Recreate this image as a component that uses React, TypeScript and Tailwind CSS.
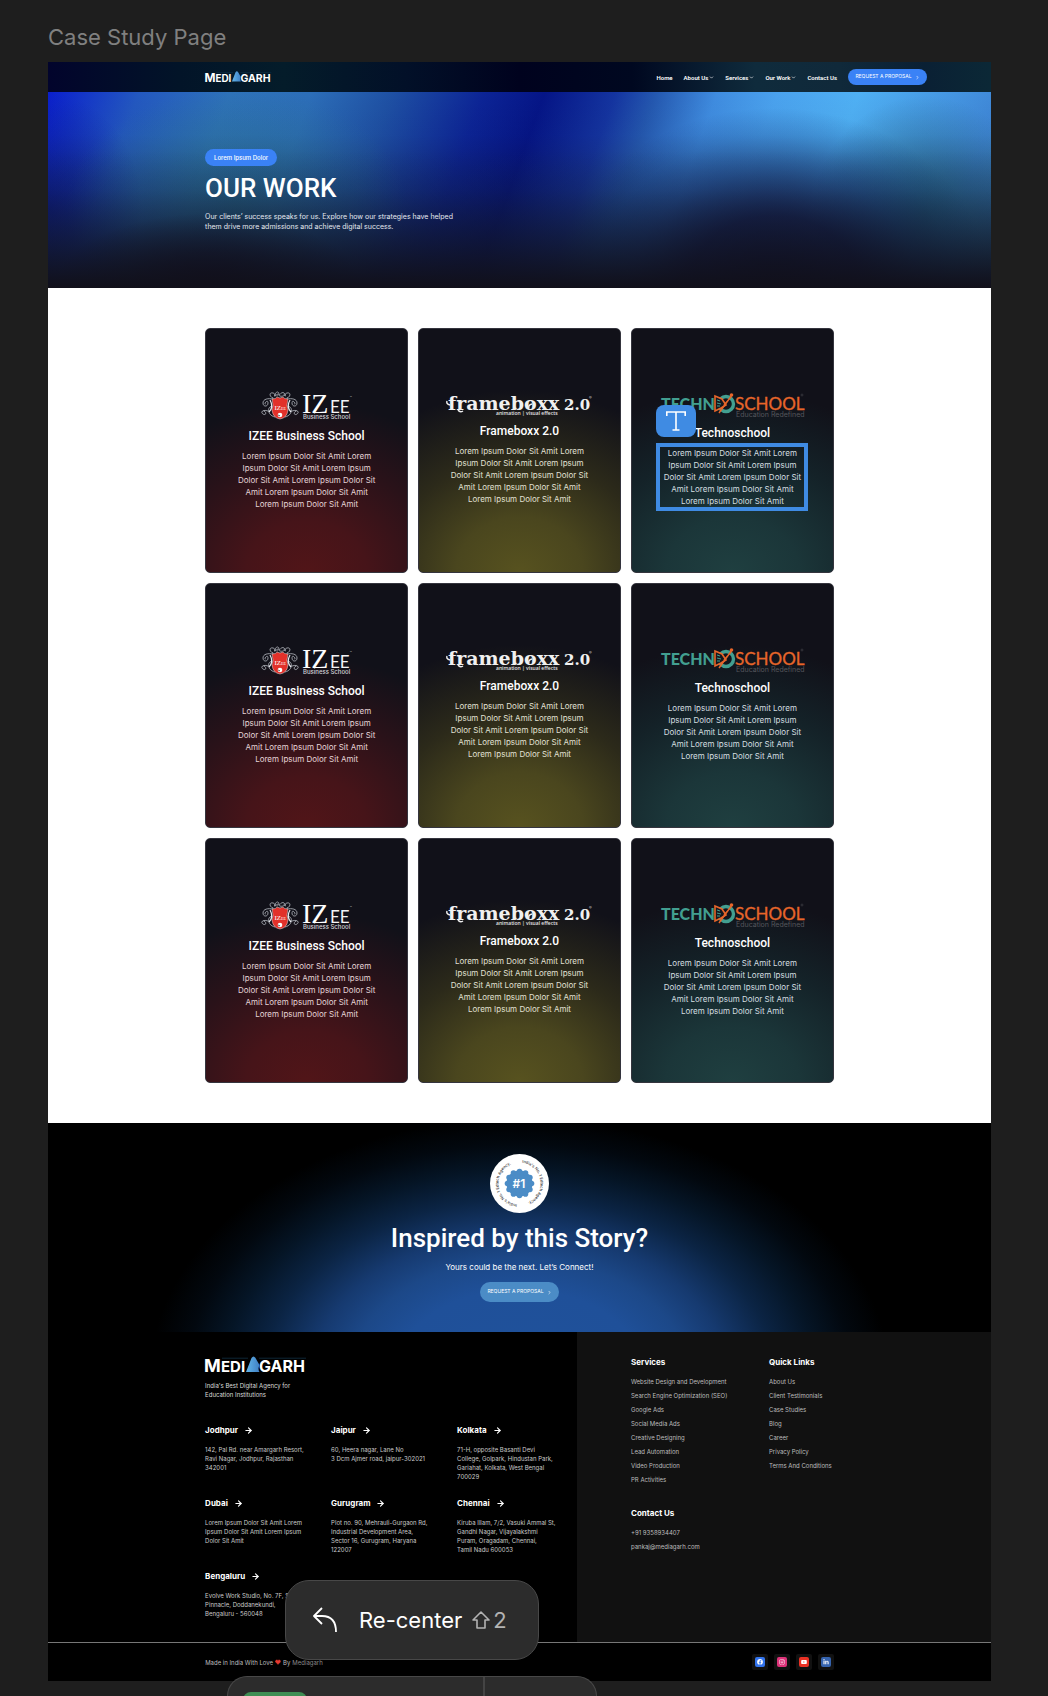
import React from "react";
import { ArrowRight, ChevronDown, ChevronRight, Heart } from "lucide-react";
import { FaFacebook, FaInstagram, FaLinkedinIn, FaYoutube } from "react-icons/fa";

function MediagarhLogo({ className, id }: { className: string; id: string }) {
  return (
    <svg viewBox="0 0 102 17" className={`overflow-visible ${className}`} role="img" aria-label="Mediagarh">
      <defs>
        <linearGradient id={id} x1="0" x2="1" y1="0" y2="0">
          <stop offset="0" stopColor="#63b6ea" />
          <stop offset="1" stopColor="#3f7fc4" />
        </linearGradient>
      </defs>
      <path d="M17 2.2H43M54 2.2H101" stroke="#17405a" strokeWidth="0.6" />
      <g fill="#fff" fontFamily="Inter, sans-serif" fontWeight="700">
        <text x="-1" y="16" fontSize="18">M</text>
        <text x="16" y="16" fontSize="15">EDI</text>
        <text x="54" y="16" fontSize="16">GARH</text>
      </g>
      <path d="M41 16L46.5 2Q48.5-1 50.5 2L54.5 9Q52.5 13 54.5 16Z" fill={`url(#${id})`} />
    </svg>
  );
}

function IzeeLogo() {
  return (
    <svg viewBox="0 0 94 30" className="h-[30px] w-[94px] overflow-visible" role="img" aria-label="IZee Business School">
      <g fill="none" stroke="#b9bcc4" strokeWidth="0.8" strokeLinecap="round">
        <path d="M13 8C9 7 9 2 13 3S12 8 16 5M13 9C8 8 3 9 3 13S8 17 8 13 4 13 5 14M12 16C6 17 8 26 15 27M8 21C3 19 0 22 3 24S7 22 4 21" />
        <path d="M27 8C31 7 31 2 27 3S28 8 24 5M27 9C32 8 37 9 37 13S32 17 32 13 36 13 35 14M28 16C34 17 32 26 25 27M32 21C37 19 40 22 37 24S33 22 36 21" />
        <path d="M15 6C15 1 19 1 19 4S21 1 24 3 22 7 20 6 17 2 17 6" />
      </g>
      <path d="M10 10Q14 17 9 22M30 10Q26 17 31 22" fill="none" stroke="#e8e8ee" strokeWidth="1.2" />
      <path d="M12 9Q16 9 17 7Q20 9 23 7Q24 9 28 9Q26 16 28 20Q27 28 20 29Q13 28 12 20Q14 16 12 9Z" fill="#e2312a" stroke="#f0e3e3" strokeWidth="0.5" />
      <text x="14.5" y="20" fontSize="7" fill="#fff" fontFamily="Liberation Serif, serif">IZ<tspan fontSize="4">EE</tspan></text>
      <circle cx="20" cy="25" r="2.3" fill="#fff" />
      <path d="M18 24.5L20 25.5L19 26.5Z" fill="#222" />
      <text x="42" y="23" fontSize="28" fill="#fff" fontFamily="Liberation Serif, serif">IZ</text>
      <text x="70" y="23" fontSize="17" fill="#f4f4f6" fontFamily="Lato, sans-serif">EE</text>
      <text x="90" y="9" fontSize="3" fill="#ddd" fontFamily="Inter, sans-serif">™</text>
      <text x="43" y="29" fontSize="6" fontWeight="500" fill="#d5d5da" fontFamily="Inter, sans-serif">Business School</text>
    </svg>
  );
}

function FrameboxxLogo() {
  return (
    <svg viewBox="0 0 146 20" className="h-5 w-[146px] overflow-visible" role="img" aria-label="frameboxx 2.0 animation visual effects">
      <g fill="#f0f0f0" fontFamily="DejaVu Serif, serif" fontWeight="700">
        <text x="2" y="15" fontSize="19">frameboxx</text>
        <text x="118" y="15" fontSize="15">2.0</text>
      </g>
      <path d="M4 10Q0 9 1 6M17 16Q14 18 12 15M86 9Q82 10 83 13" stroke="#f0f0f0" strokeWidth="1.4" fill="none" />
      <text x="50" y="20" fontSize="5" fontWeight="600" fill="#e5e5e5" fontFamily="Open Sans, sans-serif">animation | visual effects</text>
      <text x="143" y="4" fontSize="4" fill="#ccc" fontFamily="Inter, sans-serif">®</text>
    </svg>
  );
}

function TechnoschoolLogo() {
  return (
    <svg viewBox="0 0 144 24" className="h-6 w-[144px] overflow-visible" role="img" aria-label="Technoschool Education Redefined">
      <text x="1" y="17" fontSize="16" fontWeight="900" fill="#429f90" fontFamily="Lato, sans-serif">TECHN</text>
      <circle cx="66" cy="11" r="7.5" fill="none" stroke="#429f90" strokeWidth="3.4" />
      <path d="M55 3L62 6L66 12L61 15L55 18Z" fill="#17181f" stroke="#e8662a" strokeWidth="1.6" />
      <path d="M57 7L60 8M57 10L61 11M57 13L60 13" stroke="#429f90" strokeWidth="1" />
      <path d="M59 20L72 2M64 12L71 4" stroke="#e8662a" strokeWidth="1.4" />
      <circle cx="71.5" cy="2" r="1.8" fill="#e8662a" />
      <text x="75" y="17" fontSize="17" fill="#e8662a" stroke="#e8662a" strokeWidth="0.3" fontFamily="Lato, sans-serif">SCHOOL</text>
      <text x="76" y="24" fontSize="7" fill="#55565c" fontFamily="Inter, sans-serif">Education Redefined</text>
      <circle cx="142" cy="2" r="1" fill="none" stroke="#44454c" strokeWidth="0.6" />
    </svg>
  );
}

const loremLines = [
  "Lorem Ipsum Dolor Sit Amit Lorem",
  "Ipsum Dolor Sit Amit Lorem Ipsum",
  "Dolor Sit Amit Lorem Ipsum Dolor Sit",
  "Amit Lorem Ipsum Dolor Sit Amit",
  "Lorem Ipsum Dolor Sit Amit",
];

const kinds = [
  {
    title: "IZEE Business School",
    Logo: IzeeLogo,
    bg: "bg-[radial-gradient(ellipse_100%_70%_at_50%_100%,#511518_0%,#461419_30%,#2a1219_65%,#111119_100%)]",
    text: "text-[#e6d5d8]",
  },
  {
    title: "Frameboxx 2.0",
    Logo: FrameboxxLogo,
    bg: "bg-[radial-gradient(ellipse_105%_75%_at_50%_100%,#57521f_0%,#4a461e_30%,#2c2a1a_62%,#111119_100%)]",
    text: "text-[#e2e1d4]",
  },
  {
    title: "Technoschool",
    Logo: TechnoschoolLogo,
    bg: "bg-[radial-gradient(ellipse_110%_75%_at_50%_100%,#1f3f40_0%,#1b3639_30%,#142228_65%,#111119_100%)]",
    text: "text-[#d5dfe0]",
  },
];

function Lines({ lines }: { lines: string[] }) {
  return (
    <>
      {lines.map((l, i) => (
        <React.Fragment key={i}>
          {i > 0 && <br />}
          {l}
        </React.Fragment>
      ))}
    </>
  );
}

function Card({ kind, selected }: { kind: (typeof kinds)[number]; selected: boolean }) {
  const { Logo } = kind;
  return (
    <article className={`flex h-[245px] flex-col items-center justify-center rounded-[5px] border border-[#34343d] pb-px ${kind.bg}`}>
      <Logo />
      <h3 className="mt-2 font-[Roboto] text-[12px] leading-4 font-medium text-white">{kind.title}</h3>
      <div className="relative mt-[6px] w-36">
        <p className={`text-center text-[8px] leading-3 whitespace-nowrap ${kind.text}`}>
          <Lines lines={loremLines} />
        </p>
        {selected && (
          <>
            <div className="absolute -inset-1 border-4 border-[#3f8be3]" />
            <div className="absolute -top-[42px] -left-1 flex h-8 w-10 items-center justify-center rounded-lg bg-[#3f8be3]">
              <svg viewBox="0 0 20 20" className="size-5" fill="none" stroke="#fff" strokeWidth="1.6">
                <path d="M0.8 5V1H19.2V5M10 1V19M6.5 19H13.5" />
              </svg>
            </div>
          </>
        )}
      </div>
    </article>
  );
}

const cities: [string, string[]][] = [
  ["Jodhpur", ["142, Pal Rd. near Amargarh Resort,", "Ravi Nagar, Jodhpur, Rajasthan", "342001"]],
  ["Jaipur", ["60, Heera nagar, Lane No", "3 Dcm Ajmer road, jaipur-302021"]],
  ["Kolkata", ["71-H, opposite Basanti Devi", "College, Golpark, Hindustan Park,", "Gariahat, Kolkata, West Bengal", "700029"]],
  ["Dubai", ["Lorem Ipsum Dolor Sit Amit Lorem", "Ipsum Dolor Sit Amit Lorem Ipsum", "Dolor Sit Amit"]],
  ["Gurugram", ["Plot no. 90, Mehrauli-Gurgaon Rd,", "Industrial Development Area,", "Sector 16, Gurugram, Haryana", "122007"]],
  ["Chennai", ["Kiruba Illam, 7/2, Vasuki Ammal St,", "Gandhi Nagar, Vijayalakshmi", "Puram, Oragadam, Chennai,", "Tamil Nadu 600053"]],
  ["Bengaluru", ["Evolve Work Studio, No. 7F, Shree", "Pinnacle, Doddanekundi,", "Bengaluru - 560048"]],
];

const services = [
  "Website Design and Development",
  "Search Engine Optimization (SEO)",
  "Google Ads",
  "Social Media Ads",
  "Creative Designing",
  "Lead Automation",
  "Video Production",
  "PR Activities",
];
const quickLinks = ["About Us", "Client Testimonials", "Case Studies", "Blog", "Career", "Privacy Policy", "Terms And Conditions"];

function LinkList({ title, items }: { title: string; items: string[] }) {
  return (
    <section>
      <h4 className="text-[8px] leading-3 font-bold text-white">{title}</h4>
      <ul className="mt-[7px] text-[6px] leading-[14px] whitespace-nowrap text-[#bdbdbd]">
        {items.map((t) => (
          <li key={t}>
            <a href="#" className="block">{t}</a>
          </li>
        ))}
      </ul>
    </section>
  );
}

function AwardBadge() {
  const star = Array.from({ length: 12 }, (_, i) => {
    const a = (i * Math.PI) / 6;
    return { x: 29.5 + 12 * Math.sin(a), y: 29.5 - 12 * Math.cos(a) };
  });
  return (
    <svg viewBox="0 0 59 59" className="size-[59px]" role="img" aria-label="India's No. 1 Edtech Agency">
      <circle cx="29.5" cy="29.5" r="29.5" fill="#fff" />
      <path id="ring" d="M29.5 8.5A21 21 0 0 1 29.5 50.5A21 21 0 0 1 29.5 8.5" fill="none" />
      <text fontSize="4" fontWeight="500" fill="#333" fontFamily="Inter, sans-serif">
        <textPath href="#ring" startOffset="2%">India's No. 1 Edtech Agency.</textPath>
      </text>
      <text fontSize="4" fontWeight="500" fill="#333" fontFamily="Inter, sans-serif">
        <textPath href="#ring" startOffset="52%">India's No. 1 Edtech Agency.</textPath>
      </text>
      <circle cx="29.5" cy="29.5" r="13" fill="#4b8cc6" />
      {star.map((p, i) => (
        <circle key={i} cx={p.x} cy={p.y} r="2.8" fill="#4b8cc6" />
      ))}
      <text x="29" y="34" textAnchor="middle" fontSize="12" fontWeight="600" fill="#fff" fontFamily="Inter, sans-serif">#1</text>
    </svg>
  );
}

const navItems: [string, boolean][] = [
  ["Home", false],
  ["About Us", true],
  ["Services", true],
  ["Our Work", true],
  ["Contact Us", false],
];

const socials = [
  { name: "Facebook", Icon: FaFacebook, bg: "bg-[#3273ec]" },
  { name: "Instagram", Icon: FaInstagram, bg: "bg-[#dd3279]" },
  { name: "YouTube", Icon: FaYoutube, bg: "bg-[#ea3124]" },
  { name: "LinkedIn", Icon: FaLinkedinIn, bg: "bg-[#3563ae]" },
];

export default function App() {
  return (
    <div className="relative min-h-screen overflow-hidden bg-[#1e1e1e] pb-[15px] font-[Inter,sans-serif]">
      <p className="pt-[21px] pb-[9px] pl-12 text-[22px] leading-8 text-[#808080]">Case Study Page</p>

      <div className="mr-[57px] ml-12 bg-white">
        <header className="flex h-[30px] items-center justify-between bg-[linear-gradient(90deg,#02042c_0%,#021428_14%,#041c2a_25%,#021028_38%,#00021e_50%,#000820_62%,#0f2b3c_75%,#10293a_84%,#0a2034_93%,#0b2836_100%)] pr-16 pl-[16.66%]">
          <a href="#" className="block">
            <MediagarhLogo id="tower-top" className="w-[67px]" />
          </a>
          <nav className="flex items-center gap-[11px] font-[Roboto] text-[6px] font-semibold text-white">
            {navItems.map(([label, menu]) =>
              menu ? (
                <button key={label} type="button" className="flex items-center gap-px">
                  {label}
                  <ChevronDown className="size-[5px]" strokeWidth={3} />
                </button>
              ) : (
                <a key={label} href="#">{label}</a>
              )
            )}
            <button type="button" className="flex h-4 w-[79px] items-center justify-center gap-[3px] rounded-full bg-[#3a82f6] font-[Inter] text-[5px] font-normal">
              REQUEST A PROPOSAL
              <ChevronRight className="size-[5px]" strokeWidth={3} />
            </button>
          </nav>
        </header>

        <section className="flex h-[196px] flex-col items-start bg-[linear-gradient(180deg,rgba(17,16,26,0)_0%,rgba(17,16,26,0.04)_22%,rgba(17,17,32,0.28)_50%,rgba(17,17,28,0.68)_78%,#11101a_100%),radial-gradient(ellipse_23%_92%_at_77%_100%,rgba(13,15,50,0.95)_0%,rgba(13,17,66,0.8)_40%,rgba(16,40,104,0.5)_66%,rgba(20,60,130,0.25)_84%,rgba(20,60,130,0)_100%),radial-gradient(ellipse_16%_36%_at_17%_98%,#120e2a_0%,rgba(18,14,42,0.6)_45%,rgba(18,14,42,0)_100%),radial-gradient(ellipse_12%_60%_at_93%_62%,rgba(30,92,112,0.75)_0%,rgba(30,92,112,0)_100%),linear-gradient(180deg,rgba(12,28,80,0)_30%,rgba(12,34,84,0.6)_100%),radial-gradient(ellipse_18%_60%_at_20%_58%,rgba(42,115,145,0.8)_0%,rgba(42,115,145,0)_100%),radial-gradient(ellipse_10%_60%_at_0%_60%,rgba(8,22,150,0.8)_0%,rgba(8,22,150,0)_100%),linear-gradient(110deg,#0a1fce_0%,#2358c0_9%,#2e72ba_18%,#2c6eb8_26%,#1e50a4_34%,#0c2496_43%,#051587_49%,#1434a0_56%,#2458b0_60%,#3f8ce0_66%,#4aa2ee_72%,#4fb0f4_80%,#3f88d8_94%,#3a80b8_100%)] pt-[57px] pl-[16.66%] text-white">
          <span className="flex h-[17px] w-[72px] items-center justify-center rounded-full bg-[#3a82f6] text-[6px] font-medium">Lorem Ipsum Dolor</span>
          <h1 className="mt-[6px] font-[Roboto] text-[26px] leading-8 font-medium">OUR WORK</h1>
          <p className="mt-[8px] text-[7px] leading-[10px] text-[#e4e8f0]">
            Our clients’ success speaks for us. Explore how our strategies have helped
            <br />
            them drive more admissions and achieve digital success.
          </p>
        </section>

        <main className="mx-auto grid w-2/3 grid-cols-3 gap-[10px] py-10">
          {[0, 1, 2].map((row) => kinds.map((k, col) => <Card key={`${row}${col}`} kind={k} selected={row === 0 && col === 2} />))}
        </main>

        <section className="flex flex-col items-center bg-black bg-[radial-gradient(ellipse_370px_260px_at_50%_122%,#1f529c_0%,#1f5099_34%,#1c4888_46%,#163a70_56%,#0b2444_69%,#051526_80%,#02080f_90%,#000_100%)] pt-[31px] pb-[30px] text-white">
          <AwardBadge />
          <h2 className="mt-[9px] font-[Roboto] text-[26px] leading-8 font-medium">Inspired by this Story?</h2>
          <p className="mt-[7px] text-[8px] leading-3">Yours could be the next. Let’s Connect!</p>
          <button type="button" className="mt-[9px] flex h-5 w-[79px] items-center justify-center gap-[3px] rounded-full bg-[#4b8cc6] text-[5px]">
            REQUEST A PROPOSAL
            <ChevronRight className="size-[5px]" strokeWidth={3} />
          </button>
        </section>

        <footer className="bg-black">
          <div className="grid grid-cols-[529fr_414fr]">
            <div className="pt-6 pb-6 pl-[29.7%]">
              <MediagarhLogo id="tower-foot" className="w-[102px]" />
              <p className="mt-2 text-[6px] leading-[9px] text-[#dcdcdc]">
                <Lines lines={["India's Best Digital Agency for", "Education Institutions"]} />
              </p>
              <div className="mt-[25px] grid grid-cols-[126px_126px_1fr] gap-y-4">
                {cities.map(([name, lines]) => (
                  <section key={name}>
                    <h4 className="flex items-center gap-[6px] text-[8px] leading-3 font-bold text-white">
                      {name}
                      <ArrowRight className="size-[9px]" strokeWidth={3} />
                    </h4>
                    <p className="mt-[9px] text-[6px] leading-[9px] whitespace-nowrap text-[#cacaca]">
                      <Lines lines={lines} />
                    </p>
                  </section>
                ))}
              </div>
            </div>
            <div className="grid grid-cols-[138px_1fr] content-start gap-y-5 bg-[#111] pt-6 pl-[54px]">
              <LinkList title="Services" items={services} />
              <LinkList title="Quick Links" items={quickLinks} />
              <LinkList title="Contact Us" items={["+91 9358934407", "pankaj@mediagarh.com"]} />
            </div>
          </div>
          <div className="border-t border-[#777]">
            <div className="mx-auto flex h-[38px] w-2/3 items-center justify-between">
              <p className="flex items-center gap-[2px] text-[6px] text-[#bdbdbd]">
                Made in India With Love <Heart className="size-[6px] fill-[#e5392f] text-[#e5392f]" /> By <a href="#" className="text-[#8a8a8a]">Mediagarh</a>
              </p>
              <div className="flex gap-[6px]">
                {socials.map(({ name, Icon, bg }) => (
                  <a key={name} href="#" aria-label={name} className="flex size-4 items-center justify-center rounded-[2px] bg-[#111]">
                    <span className={`flex size-[10px] items-center justify-center rounded-[2px] text-white ${bg}`}>
                      <Icon className="size-[6px]" />
                    </span>
                  </a>
                ))}
              </div>
            </div>
          </div>
        </footer>
      </div>

      <button type="button" className="absolute bottom-9 left-[285px] flex h-20 w-[254px] items-center rounded-3xl border border-[#484848] bg-[#2c2c2c] pl-[27px] text-[22px] text-white">
        <svg viewBox="0 0 24 26" className="h-[26px] w-6" fill="none" stroke="#fff" strokeWidth="1.8" strokeLinejoin="round">
          <path d="M9 1L1 9L9 17M1 9H9Q23 9 23 25" />
        </svg>
        <span className="ml-[22px]">Re-center</span>
        <span className="ml-[10px] flex items-center gap-[3px] text-[#b3b3b3]">
          <svg viewBox="0 0 18 18" className="size-[18px]" fill="none" stroke="currentColor" strokeWidth="1.6" strokeLinejoin="round">
            <path d="M9 1L17 9H13V17H5V9H1Z" />
          </svg>
          2
        </span>
      </button>

      <div className="absolute bottom-0 left-[227px] flex h-5 w-[370px] overflow-hidden rounded-t-[28px] border border-b-0 border-[#484848] bg-[#2c2c2c]">
        <div className="w-[257px] border-r-2 border-[#444] pt-[15px] pl-[15px]">
          <button type="button" aria-label="Move" className="block h-16 w-16 rounded-lg bg-[#3f8e54]" />
        </div>
      </div>
    </div>
  );
}
